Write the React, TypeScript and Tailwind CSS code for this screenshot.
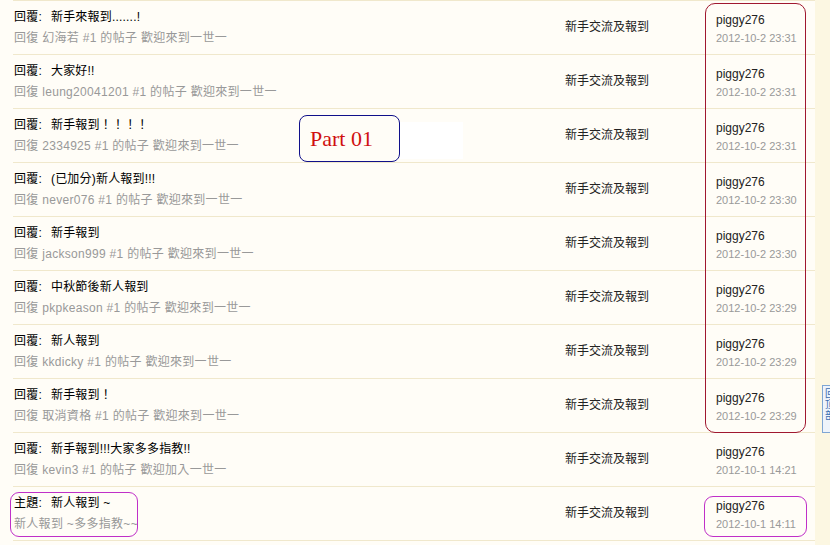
import React from 'react'

interface Row {
  title:  string
  prefix: string
  sub:    string
  time:   string
}

const rows: Row[] = [
  { prefix: '回覆:', title: '新手來報到.......!', sub: '回復 幻海若 #1 的帖子 歡迎來到一世一', time: '2012-10-2 23:31' },
  { prefix: '回覆:', title: '大家好!!', sub: '回復 leung20041201 #1 的帖子 歡迎來到一世一', time: '2012-10-2 23:31' },
  { prefix: '回覆:', title: '新手報到！！！！', sub: '回復 2334925 #1 的帖子 歡迎來到一世一', time: '2012-10-2 23:31' },
  { prefix: '回覆:', title: '(已加分)新人報到!!!', sub: '回復 never076 #1 的帖子 歡迎來到一世一', time: '2012-10-2 23:30' },
  { prefix: '回覆:', title: '新手報到', sub: '回復 jackson999 #1 的帖子 歡迎來到一世一', time: '2012-10-2 23:30' },
  { prefix: '回覆:', title: '中秋節後新人報到', sub: '回復 pkpkeason #1 的帖子 歡迎來到一世一', time: '2012-10-2 23:29' },
  { prefix: '回覆:', title: '新人報到', sub: '回復 kkdicky #1 的帖子 歡迎來到一世一', time: '2012-10-2 23:29' },
  { prefix: '回覆:', title: '新手報到！', sub: '回復 取消資格 #1 的帖子 歡迎來到一世一', time: '2012-10-2 23:29' },
  { prefix: '回覆:', title: '新手報到!!!大家多多指教!!', sub: '回復 kevin3 #1 的帖子 歡迎加入一世一', time: '2012-10-1 14:21' },
  { prefix: '主題:', title: '新人報到 ~', sub: '新人報到 ~多多指教~~', time: '2012-10-1 14:11' },
]

const font = { fontFamily: 'Arial, "Liberation Sans", "Noto Sans CJK TC", sans-serif' }

export default function App() {
  return (
    <div className="relative w-[830px] h-[545px] overflow-hidden bg-[#fcf7e2] flex text-[12px]" style={font}>
      {/* Main list */}
      <div className="w-[815px] h-full bg-[#fffdf7] pl-[13px]">
        <div className="border-t border-[#f0e8cc]">
          {rows.map((r, i) => (
            <div key={i} className="h-[54px] border-b border-[#f0e8cc] flex">
              <div className="w-[552px] flex flex-col pl-px pt-[7px]">
                <span className="text-[#000] leading-[18px] tracking-[0.2px]">
                  {r.prefix}<span className="ml-[9px]">{r.title}</span>
                </span>
                <span className="text-[#999] leading-[18px] mt-[3px] tracking-[0.3px]">{r.sub}</span>
              </div>
              <div className="w-[151px] flex items-center text-[#222] pb-[2px]">新手交流及報到</div>
              <div className="flex flex-col pt-[10px]">
                <span className="text-[#222] leading-[18px]">piggy276</span>
                <span className="text-[#999] text-[11px] leading-[16px] mt-[1px]">{r.time}</span>
              </div>
            </div>
          ))}
        </div>
      </div>

      {/* Right strip widget */}
      <div className="absolute left-[822px] top-[385px] w-[14px] h-[48px] border border-[#7fa6d4] bg-[#eef4fb] text-[#3a6db0] text-[10px] leading-[11px] pl-[2px] pt-[2px]">
        回<br />頂<br />部
      </div>

      {/* Annotations */}
      <div className="absolute left-[705px] top-[3px] w-[101px] h-[430px] rounded-[10px] border border-[#a01830]" />
      <div className="absolute left-[10px] top-[492px] w-[128px] h-[45px] rounded-[9px] border border-[#c030c8]" />
      <div className="absolute left-[704px] top-[496px] w-[103px] h-[41px] rounded-[9px] border border-[#c030c8]" />
      <div className="absolute left-[400px] top-[122px] w-[63px] h-[37px] bg-white" />
      <div
        className="absolute left-[299px] top-[115px] w-[101px] h-[47px] rounded-[8px] border border-[#10108a] bg-[#fffdf7] flex items-center pl-[10px] text-[#d01010] text-[22px]"
        style={{ fontFamily: '"Liberation Serif", "Times New Roman", serif' }}
      >
        Part 01
      </div>
    </div>
  )
}
